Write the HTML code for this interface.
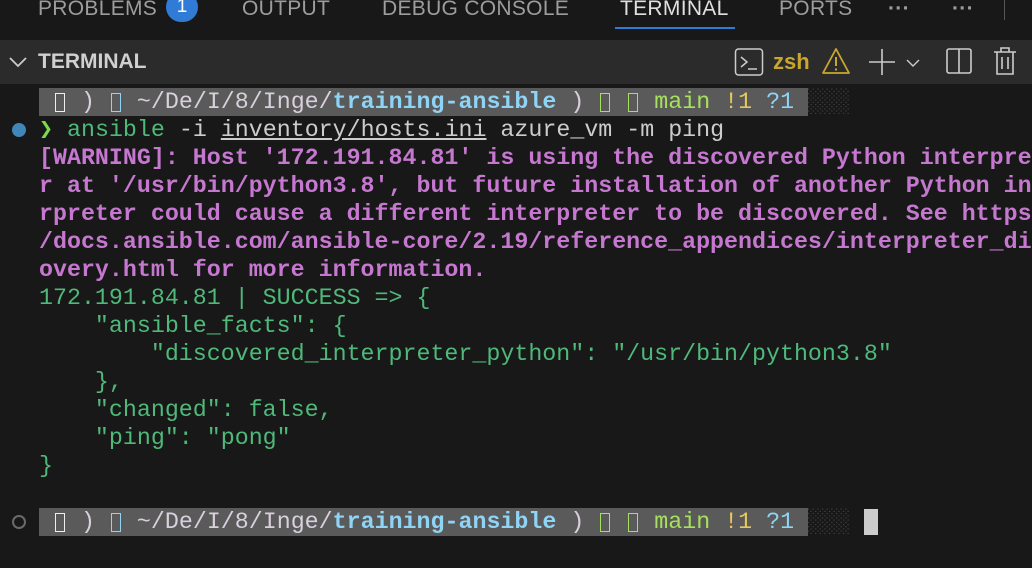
<!DOCTYPE html>
<html><head><style>
html,body{margin:0;width:1032px;height:568px;overflow:hidden}
body{background:#181818;font-family:"Liberation Sans",sans-serif;position:relative}
.tab{position:absolute;top:-3px;font-size:21px;color:#9d9d9d;letter-spacing:0.3px}
.hdr{position:absolute;top:40px;left:0;width:1032px;height:44px;background:#2b2b2b}
.term{position:absolute;top:88px;left:39px;font-family:"Liberation Mono","DejaVu Sans Mono",monospace;font-size:23.3px;line-height:28px;color:#cccccc}
.row{height:28px;white-space:pre}
.m{color:#c678d0;font-weight:bold}
.g{color:#4fb97a}
.bar{background:#5a5a5a;display:inline-block;height:28px}
.b{color:#8fd3f5}.bb{color:#8fd3f5;font-weight:bold}
.lg{color:#a6e05d}.y{color:#e5c75c}.w{color:#d8d0dc}
.bx{display:inline-block;width:14px;height:28px;position:relative;vertical-align:top}
.bx::after{content:"";position:absolute;left:2px;top:5px;width:8px;height:17px;border:1.5px solid currentColor}
</style></head><body>
<div class="tab" style="left:38px">PROBLEMS</div>
<div style="position:absolute;left:166px;top:-8px;width:32px;height:30px;border-radius:16px;background:#2f7bd6;color:#fff;font-size:19px;text-align:center;line-height:30px">1</div>
<div class="tab" style="left:242px">OUTPUT</div>
<div class="tab" style="left:382px">DEBUG CONSOLE</div>
<div class="tab" style="left:620px;color:#e0e0e0">TERMINAL</div>
<div style="position:absolute;left:615px;top:27px;width:120px;height:2px;background:#2f7bd6"></div>
<div class="tab" style="left:779px">PORTS</div>
<div class="tab" style="left:888px;font-weight:bold">···</div>
<div class="tab" style="left:952px;font-weight:bold">···</div>
<div style="position:absolute;left:1004px;top:0;width:1px;height:20px;background:#555"></div>
<div class="hdr">
<svg style="position:absolute;left:8px;top:15px" width="20" height="14"><path d="M2 3 L10 11 L18 3" stroke="#ccc" stroke-width="1.8" fill="none"/></svg>
<div style="position:absolute;left:38px;top:10px;font-size:21px;font-weight:bold;color:#d0d0d0">TERMINAL</div>
<svg style="position:absolute;left:734px;top:7px" width="30" height="30"><rect x="1.5" y="2" width="27" height="26" rx="3" fill="none" stroke="#ccc" stroke-width="1.5"/><path d="M7 10 L13 15 L7 20 M14 22 H23" stroke="#ccc" stroke-width="1.5" fill="none"/></svg>
<div style="position:absolute;left:773px;top:9px;font-size:22px;font-weight:bold;color:#c9a72d">zsh</div>
<svg style="position:absolute;left:821px;top:7px" width="30" height="28"><path d="M15 2 L28 26 H2 Z" fill="none" stroke="#c9a72d" stroke-width="1.8" stroke-linejoin="round"/><path d="M15 10 V19 M15 21.5 V23.5" stroke="#c9a72d" stroke-width="2"/></svg>
<svg style="position:absolute;left:868px;top:8px" width="60" height="28"><path d="M14 1 V27 M1 14 H27" stroke="#ccc" stroke-width="1.6"/><path d="M39 12 L45 18 L51 12" stroke="#ccc" stroke-width="1.4" fill="none"/></svg>
<svg style="position:absolute;left:945px;top:7px" width="28" height="28"><rect x="2" y="2" width="24" height="24" rx="2" fill="none" stroke="#ccc" stroke-width="1.6"/><path d="M14 2 V26" stroke="#ccc" stroke-width="1.6"/></svg>
<svg style="position:absolute;left:993px;top:6px" width="24" height="30"><path d="M1 6 H23 M8 6 V2 H16 V6 M4 6 V28 H20 V6 M9 11 V23 M15 11 V23" stroke="#ccc" stroke-width="1.6" fill="none"/></svg>
</div>
<div style="position:absolute;left:12px;top:123px;width:14px;height:14px;border-radius:7px;background:#3e87b8"></div>
<div style="position:absolute;left:12px;top:515px;width:10px;height:10px;border-radius:7px;border:2px solid #6a6a6a"></div>
<div class="term"><div class="row"><span class="bar"> <span class="bx" style="color:#eee"></span> <span class="w">)</span> <span class="bx b"></span> <span class="w">~/De/I/8/Inge/</span><span class="bb">training-ansible</span> <span class="w">)</span> <span class="bx lg"></span> <span class="bx lg"></span> <span class="lg">main</span> <span class="y">!1</span> <span class="b">?1</span> </span><span style="color:#444">░░░</span></div><div class="row"><span style="color:#7ddb4a">❯</span> <span class="g">ansible</span> -i <u>inventory/hosts.ini</u> azure_vm -m ping</div><div class="row m">[WARNING]: Host '172.191.84.81' is using the discovered Python interpre</div><div class="row m">r at '/usr/bin/python3.8', but future installation of another Python in</div><div class="row m">rpreter could cause a different interpreter to be discovered. See https</div><div class="row m">/docs.ansible.com/ansible-core/2.19/reference_appendices/interpreter_di</div><div class="row m">overy.html for more information.</div><div class="row g">172.191.84.81 | SUCCESS =&gt; {</div><div class="row g">    "ansible_facts": {</div><div class="row g">        "discovered_interpreter_python": "/usr/bin/python3.8"</div><div class="row g">    },</div><div class="row g">    "changed": false,</div><div class="row g">    "ping": "pong"</div><div class="row g">}</div><div class="row"> </div><div class="row"><span class="bar"> <span class="bx" style="color:#eee"></span> <span class="w">)</span> <span class="bx b"></span> <span class="w">~/De/I/8/Inge/</span><span class="bb">training-ansible</span> <span class="w">)</span> <span class="bx lg"></span> <span class="bx lg"></span> <span class="lg">main</span> <span class="y">!1</span> <span class="b">?1</span> </span><span style="color:#444">░░░</span> <span style="background:#ccc"> </span></div></div>
</body></html>
